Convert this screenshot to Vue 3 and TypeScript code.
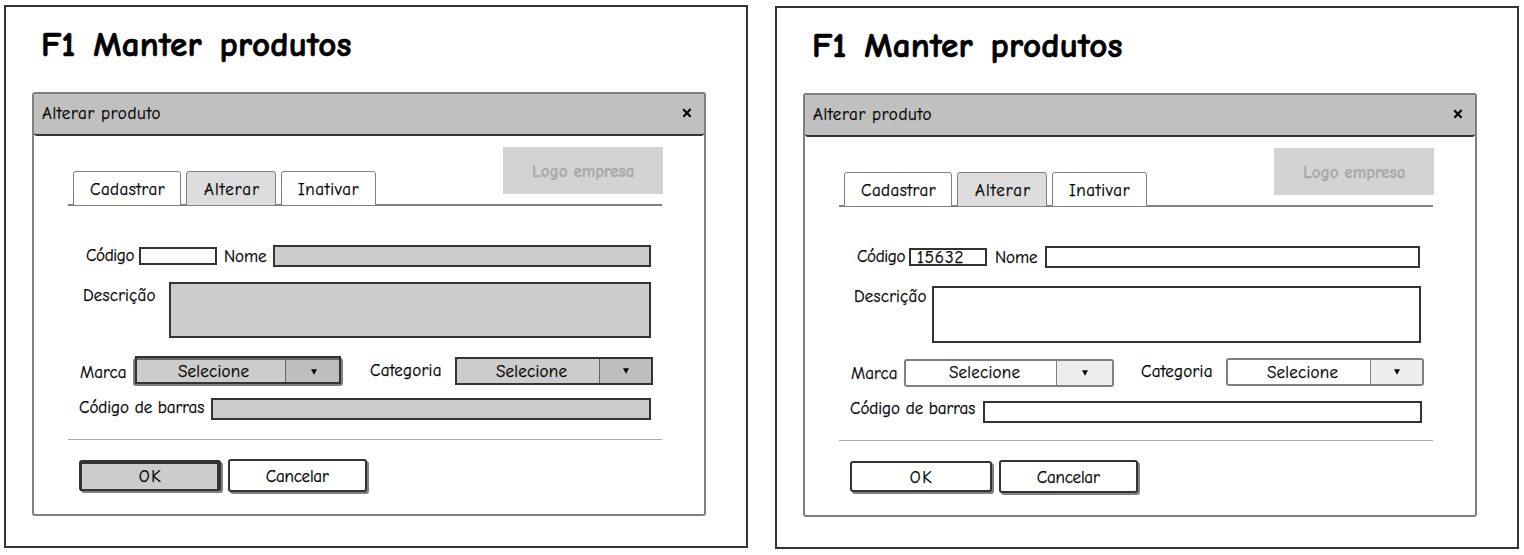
<script setup lang="ts">
interface Screen {
  variant: 'locked' | 'editable'
  code: string
}

const screens: Screen[] = [
  { variant: 'locked', code: '' },
  { variant: 'editable', code: '15632' },
]

const family = '"Comic Sans MS", "Comic Neue", "Open Sans", "Noto Sans", sans-serif'
const context = document.createElement('canvas').getContext('2d')

// Tracks the lettering so that every caption fills its own column.
function fit(text: string, width: number, font = '17px', wordGap = 0) {
  if (!context) return { width: `${width}px` }
  context.font = `${font} ${family}`
  const gaps = (text.split(' ').length - 1) * wordGap
  const spacing = (width - 0.6 - gaps - context.measureText(text).width) / (text.length - 1)
  return { width: `${width}px`, letterSpacing: `${spacing.toFixed(3)}px`, wordSpacing: `${wordGap}px` }
}
</script>

<template>
  <main class="board">
    <section v-for="screen in screens" :key="screen.variant" class="panel" :class="screen.variant">
      <h1 class="title"><span class="text" :style="fit('F1 Manter produtos', 311, 'bold 35px', 5)">F1 Manter produtos</span></h1>
      <div class="dialog">
        <header class="bar">
          <span class="text" :style="fit('Alterar produto', 119)">Alterar produto</span>
          <svg class="close" width="10" height="10" viewBox="0 0 10 10">
            <path d="M1.2 1.2 L8.6 8.8 M8.6 1 L1.4 8.8" />
          </svg>
        </header>
        <nav class="tabs">
          <div class="tab cadastrar"><span class="text" :style="fit('Cadastrar', 75)">Cadastrar</span></div>
          <div class="tab alterar"><span class="text" :style="fit('Alterar', 55.5)">Alterar</span></div>
          <div class="tab inativar"><span class="text" :style="fit('Inativar', 61)">Inativar</span></div>
          <div class="logo"><span class="text" :style="fit('Logo empresa', 103, 'bold 17px')">Logo empresa</span></div>
        </nav>
        <div class="form">
          <div class="row row-code">
            <span class="text label-code" :style="fit('Código', 49)">Código</span>
            <div class="box code"><span v-if="screen.code" class="text" :style="fit(screen.code, 47)">{{ screen.code }}</span></div>
            <span class="text label-name" :style="fit('Nome', 43)">Nome</span>
            <div class="box field name"></div>
          </div>
          <div class="row row-desc">
            <span class="text label-desc" :style="fit('Descrição', 73)">Descrição</span>
            <div class="box field desc"></div>
          </div>
          <div class="row row-combos">
            <span class="text label-brand" :style="fit('Marca', 47)">Marca</span>
            <div class="combo brand">
              <div class="value"><span class="text" :style="fit('Selecione', 71.5)">Selecione</span></div>
              <div class="arrow"><svg width="6" height="6" viewBox="0 0 6 6"><path d="M0 0.3H6L3 5.8Z" /></svg></div>
              <div v-if="screen.variant === 'locked'" class="shade"></div>
            </div>
            <span class="text label-category" :style="fit('Categoria', 72)">Categoria</span>
            <div class="combo category">
              <div class="value"><span class="text" :style="fit('Selecione', 71.5)">Selecione</span></div>
              <div class="arrow"><svg width="6" height="6" viewBox="0 0 6 6"><path d="M0 0.3H6L3 5.8Z" /></svg></div>
              <div v-if="screen.variant === 'locked'" class="shade"></div>
            </div>
          </div>
          <div class="row row-barcode">
            <span class="text label-barcode" :style="fit('Código de barras', 126)">Código de barras</span>
            <div class="box field barcode"></div>
          </div>
          <div class="row row-actions">
            <div class="button ok">
              <span class="text" :style="fit('OK', 22.5)">OK</span>
              <div v-if="screen.variant === 'locked'" class="shade"></div>
            </div>
            <div class="button cancel"><span class="text" :style="fit('Cancelar', 63.5)">Cancelar</span></div>
          </div>
        </div>
      </div>
    </section>
  </main>
</template>

<style>
body {
  background: #fff;
  overflow: hidden;
}
</style>

<style scoped>
.board,
.board * {
  box-sizing: border-box;
}
.board {
  display: flex;
  gap: 27px;
  width: 1524px;
  height: 555px;
  padding: 5px 0 0 4px;
  color: #000;
  font: 17px/22px "Comic Sans MS", "Comic Neue", "Open Sans", "Noto Sans", sans-serif;
}
.panel {
  flex: none;
  width: 744px;
  height: 543px;
  border: 2px solid #333;
}
.panel.editable {
  margin-top: 1px;
}
.text {
  display: block;
  flex: none;
  white-space: nowrap;
  -webkit-text-stroke: 0.25px currentColor;
}
.title {
  height: 85px;
  margin: 0;
  padding: 18px 0 0 35px;
  font-size: 35px;
  line-height: 40px;
}
.title .text {
  -webkit-text-stroke-width: 0.7px;
}
.dialog {
  width: 674px;
  height: 424px;
  margin-left: 26px;
  border: 2px solid #808080;
  border-radius: 3px;
}
.bar {
  display: flex;
  justify-content: space-between;
  height: 42px;
  padding: 9px 12px 0 8px;
  background: #c0c0c0;
  border-bottom: 2px solid #333;
  border-radius: 0 0 3px 3px;
}
.close {
  margin-top: 5px;
  fill: none;
  stroke: #000;
  stroke-width: 2.1;
}
.tabs {
  display: flex;
  width: 594px;
  height: 70px;
  margin-left: 34px;
  padding-left: 5px;
  border-bottom: 2px solid #808080;
}
.tab {
  flex: none;
  height: 35px;
  margin: 35px 5px 0 0;
  padding-top: 7px;
  background: #fff;
  border: 1px solid #808080;
  border-radius: 3px 3px 0 0;
}
.cadastrar {
  width: 108px;
  padding-left: 16px;
}
.alterar {
  width: 90px;
  padding-left: 17px;
  background: #ddd;
}
.inativar {
  width: 95px;
  padding-left: 16px;
}
.logo {
  flex: none;
  width: 160px;
  height: 47px;
  margin: 11px -1px 0 auto;
  padding: 14px 0 0 29px;
  background: #d3d3d3;
  color: #a9a9a9;
  font-weight: bold;
}
.form {
  width: 594px;
  margin-left: 34px;
}
.row {
  display: flex;
  align-items: flex-start;
}
.box {
  flex: none;
  border: 2px solid #333;
  background: #fff;
}
.locked .field {
  background: #ccc;
}
.row-code {
  height: 76px;
  padding: 39px 0 0 18px;
}
.code {
  width: 78px;
  height: 18px;
  margin: 2px 0 0 4px;
}
.code .text {
  margin: -3px 0 0 6px;
}
.editable .code {
  margin: 2px 1px 0 3px;
}
.label-name {
  margin: 1px 0 0 7px;
}
.name {
  width: 378px;
  height: 22px;
  margin-left: 6px;
}
.editable .name {
  width: 375px;
  margin-left: 7px;
}
.label-desc {
  margin: 3px 0 0 15px;
}
.row-desc {
  height: 74px;
}
.desc {
  width: 482px;
  height: 56px;
  margin-left: 13px;
}
.editable .desc {
  width: 489px;
  height: 57px;
  margin: 3px 0 0 5px;
}
.row-combos {
  height: 42px;
}
.label-brand {
  margin: 6px 0 0 12px;
}
.combo {
  position: relative;
  display: flex;
  flex: none;
  height: 28px;
  border: 2px solid #808080;
  border-radius: 3px;
}
.brand {
  width: 210px;
  margin: 2px 0 0 6px;
}
.category {
  width: 198px;
  margin: 1px 0 0 13px;
}
.value {
  padding: 1px 0 0 43px;
  width: 150px;
}
.category .value {
  width: 142px;
  padding: 2px 0 0 39px;
}
.arrow {
  display: flex;
  flex: 1;
  padding: 9px 0 0 25px;
  background: #eee;
  border-left: 1px solid #808080;
}
.category .arrow {
  padding-left: 23px;
}
.shade {
  position: absolute;
  border: 2px solid #333;
  background: rgba(0, 0, 0, 0.2);
}
.brand .shade {
  inset: -4px 0 0 0;
}
.category .shade {
  inset: -2px;
}
.label-category {
  margin: 4px 0 0 27px;
}
.row-barcode {
  width: 594px;
  height: 42px;
  border-bottom: 1px solid #aaa;
}
.label-barcode {
  margin: -1px 0 0 11px;
}
.barcode {
  width: 440px;
  height: 22px;
  margin-left: 6px;
}
.editable .barcode {
  width: 439px;
  margin: 2px 0 0 7px;
}
.row-actions {
  padding: 19px 0 0 11px;
}
.button {
  position: relative;
  flex: none;
  display: flex;
  justify-content: center;
  border: 2px solid #333;
  border-radius: 3px;
  background: #fff;
  box-shadow: 2px 2px #808080;
}
.ok {
  width: 142px;
  height: 31px;
  margin-top: 1px;
  padding-top: 4px;
}
.ok .shade {
  inset: 0 0 -2px -1px;
}
.cancel {
  width: 139px;
  height: 33px;
  margin-left: 7px;
  padding-top: 5px;
}
</style>
